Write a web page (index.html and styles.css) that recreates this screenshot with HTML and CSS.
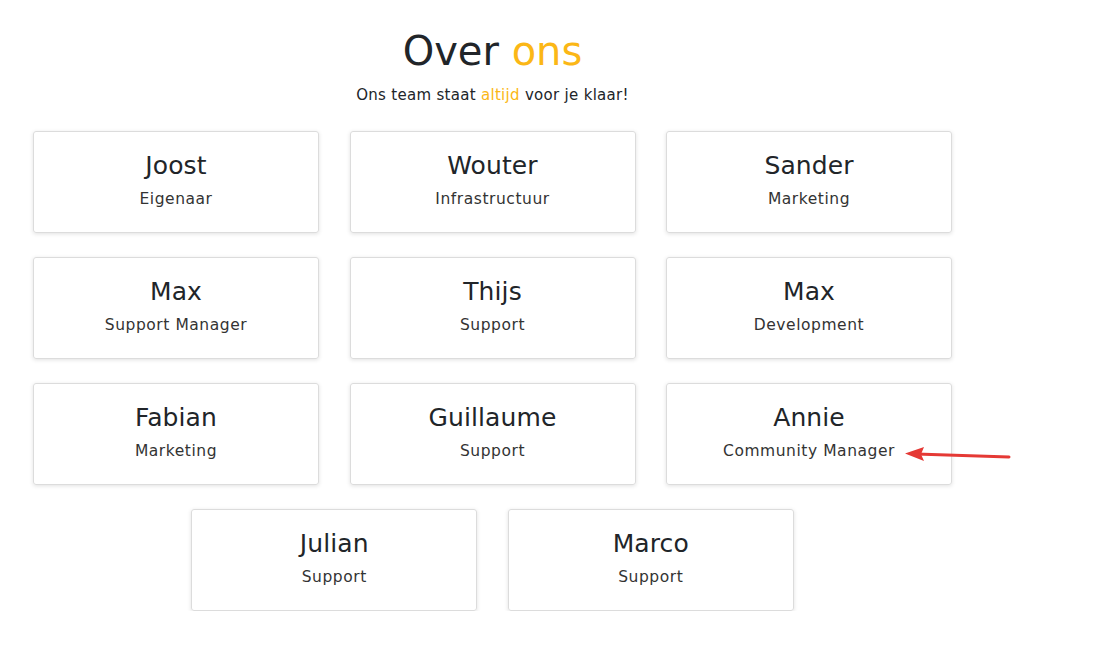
FILE: index.html
```
<!DOCTYPE html>
<html lang="nl">
<head>
<meta charset="utf-8">
<title>Over ons</title>
<link rel="stylesheet" href="styles.css">
</head>
<body>
<section class="about">
  <header class="about-head">
    <h1 class="title">Over <span class="accent">ons</span></h1>
    <p class="subtitle">Ons team staat <span class="accent">altijd</span> voor je klaar!</p>
  </header>
  <div class="team">
    <div class="card"><div class="name">Joost</div><div class="role">Eigenaar</div></div>
    <div class="card"><div class="name">Wouter</div><div class="role">Infrastructuur</div></div>
    <div class="card"><div class="name">Sander</div><div class="role">Marketing</div></div>
    <div class="card"><div class="name">Max</div><div class="role">Support Manager</div></div>
    <div class="card"><div class="name">Thijs</div><div class="role">Support</div></div>
    <div class="card"><div class="name">Max</div><div class="role">Development</div></div>
    <div class="card"><div class="name">Fabian</div><div class="role">Marketing</div></div>
    <div class="card"><div class="name">Guillaume</div><div class="role">Support</div></div>
    <div class="card card-annotated"><div class="name">Annie</div><div class="role">Community Manager</div>
      <svg class="arrow" width="108" height="20" viewBox="0 0 108 20" aria-hidden="true">
        <line x1="105" y1="12" x2="12" y2="9" stroke="#e53935" stroke-width="3" stroke-linecap="round"/>
        <polygon points="1,8.5 20,2 17,9.2 20,16" fill="#e53935"/>
      </svg>
    </div>
    <div class="card"><div class="name">Julian</div><div class="role">Support</div></div>
    <div class="card"><div class="name">Marco</div><div class="role">Support</div></div>
  </div>
</section>
</body>
</html>
```
FILE: styles.css
```
html, body {
  margin: 0;
  padding: 0;
  background: #ffffff;
}
body {
  font-family: "DejaVu Sans", "Noto Sans", sans-serif;
  color: #212529;
}
.about {
  width: 919px;
  margin-left: 33px;
  padding-top: 27px;
}
.about-head {
  text-align: center;
}
.title {
  margin: 0;
  font-size: 40px;
  font-weight: 400;
  line-height: 48px;
  color: #212529;
}
.accent {
  color: #fbb716;
}
.subtitle {
  margin: 8px 0 0;
  font-size: 15px;
  letter-spacing: 0.3px;
  line-height: 24px;
  color: #212529;
}
.team {
  display: flex;
  flex-wrap: wrap;
  justify-content: center;
  gap: 24px 30.5px;
  margin-top: 24px;
}
.card {
  width: 286px;
  height: 102px;
  box-sizing: border-box;
  border: 1px solid #dcdcdc;
  border-radius: 3px;
  box-shadow: 0 1px 4px rgba(0,0,0,0.12);
  display: flex;
  flex-direction: column;
  align-items: center;
  padding-top: 19px;
}
.card-annotated {
  position: relative;
}
.name {
  font-size: 25px;
  letter-spacing: 0.1px;
  line-height: 30px;
}
.role {
  margin-top: 7px;
  font-size: 15.5px;
  letter-spacing: 0.55px;
  line-height: 22px;
  color: #333;
}
.arrow {
  position: absolute;
  left: 237px;
  top: 61px;
}
```
